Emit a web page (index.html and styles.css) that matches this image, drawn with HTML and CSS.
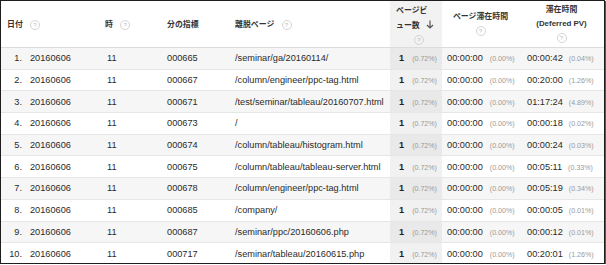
FILE: index.html
```html
<!DOCTYPE html>
<html lang="ja">
<head>
<meta charset="utf-8">
<link rel="stylesheet" href="styles.css">
</head>
<body>
<div class="frame">
<table class="report">
<colgroup>
<col class="c-idx"><col class="c-date"><col class="c-hour"><col class="c-metric"><col class="c-page"><col class="c-pv"><col class="c-time"><col class="c-def">
</colgroup>
<thead>
<tr>
<th colspan="2" class="h-left">日付 <span class="help">?</span></th>
<th class="h-left">時 <span class="help">?</span></th>
<th class="h-left">分の指標</th>
<th class="h-left">離脱ページ <span class="help">?</span></th>
<th class="h-pv sorted"><div class="pv-head"><span class="pv-text">ページビ<br>ュー数 <svg class="arrow" width="8" height="9" viewBox="0 0 8 9"><path d="M4 0.5V8M1 5l3 3 3-3" fill="none" stroke="#555" stroke-width="1.2"/></svg></span><span class="help">?</span></div></th>
<th class="h-center">ページ滞在時間<br><span class="help">?</span></th>
<th class="h-center">滞在時間<br>(Deferred PV)<br><span class="help">?</span></th>
</tr>
</thead>
<tbody>
<tr><td class="idx">1.</td><td>20160606</td><td class="num">11</td><td>000665</td><td>/seminar/ga/20160114/</td><td class="pv sorted"><b>1</b><span class="pct">(0.72%)</span></td><td class="tm"><span>00:00:00</span><span class="pct">(0.00%)</span></td><td class="tm td"><span>00:00:42</span><span class="pct">(0.04%)</span></td></tr>
<tr><td class="idx">2.</td><td>20160606</td><td class="num">11</td><td>000667</td><td>/column/engineer/ppc-tag.html</td><td class="pv sorted"><b>1</b><span class="pct">(0.72%)</span></td><td class="tm"><span>00:00:00</span><span class="pct">(0.00%)</span></td><td class="tm td"><span>00:20:00</span><span class="pct">(1.26%)</span></td></tr>
<tr><td class="idx">3.</td><td>20160606</td><td class="num">11</td><td>000671</td><td>/test/seminar/tableau/20160707.html</td><td class="pv sorted"><b>1</b><span class="pct">(0.72%)</span></td><td class="tm"><span>00:00:00</span><span class="pct">(0.00%)</span></td><td class="tm td"><span>01:17:24</span><span class="pct">(4.89%)</span></td></tr>
<tr><td class="idx">4.</td><td>20160606</td><td class="num">11</td><td>000673</td><td>/</td><td class="pv sorted"><b>1</b><span class="pct">(0.72%)</span></td><td class="tm"><span>00:00:00</span><span class="pct">(0.00%)</span></td><td class="tm td"><span>00:00:18</span><span class="pct">(0.02%)</span></td></tr>
<tr><td class="idx">5.</td><td>20160606</td><td class="num">11</td><td>000674</td><td>/column/tableau/histogram.html</td><td class="pv sorted"><b>1</b><span class="pct">(0.72%)</span></td><td class="tm"><span>00:00:00</span><span class="pct">(0.00%)</span></td><td class="tm td"><span>00:00:24</span><span class="pct">(0.03%)</span></td></tr>
<tr><td class="idx">6.</td><td>20160606</td><td class="num">11</td><td>000675</td><td>/column/tableau/tableau-server.html</td><td class="pv sorted"><b>1</b><span class="pct">(0.72%)</span></td><td class="tm"><span>00:00:00</span><span class="pct">(0.00%)</span></td><td class="tm td"><span>00:05:11</span><span class="pct">(0.33%)</span></td></tr>
<tr><td class="idx">7.</td><td>20160606</td><td class="num">11</td><td>000678</td><td>/column/engineer/ppc-tag.html</td><td class="pv sorted"><b>1</b><span class="pct">(0.72%)</span></td><td class="tm"><span>00:00:00</span><span class="pct">(0.00%)</span></td><td class="tm td"><span>00:05:19</span><span class="pct">(0.34%)</span></td></tr>
<tr><td class="idx">8.</td><td>20160606</td><td class="num">11</td><td>000685</td><td>/company/</td><td class="pv sorted"><b>1</b><span class="pct">(0.72%)</span></td><td class="tm"><span>00:00:00</span><span class="pct">(0.00%)</span></td><td class="tm td"><span>00:00:05</span><span class="pct">(0.01%)</span></td></tr>
<tr><td class="idx">9.</td><td>20160606</td><td class="num">11</td><td>000687</td><td>/seminar/ppc/20160606.php</td><td class="pv sorted"><b>1</b><span class="pct">(0.72%)</span></td><td class="tm"><span>00:00:00</span><span class="pct">(0.00%)</span></td><td class="tm td"><span>00:00:12</span><span class="pct">(0.01%)</span></td></tr>
<tr><td class="idx">10.</td><td>20160606</td><td class="num">11</td><td>000717</td><td>/seminar/tableau/20160615.php</td><td class="pv sorted"><b>1</b><span class="pct">(0.72%)</span></td><td class="tm"><span>00:00:00</span><span class="pct">(0.00%)</span></td><td class="tm td"><span>00:20:01</span><span class="pct">(1.26%)</span></td></tr>
</tbody>
</table>
</div>
</body>
</html>
```
FILE: styles.css
```css
html, body { margin: 0; padding: 0; background: #fff; }
.frame {
  width: 603px;
  height: 262px;
  border: 1px solid #1e1e1e;
  box-shadow: 1px 1px 0 #555;
  overflow: hidden;
  background: #fff;
}
.report {
  width: 603px;
  border-collapse: collapse;
  table-layout: fixed;
  font-family: "Liberation Sans", Arial, "Noto Sans CJK JP", sans-serif;
  font-size: 9.2px;
  color: #2a2a2a;
}
.c-idx { width: 24px; }
.c-date { width: 75px; }
.c-hour { width: 62px; }
.c-metric { width: 68px; }
.c-page { width: 160px; }
.c-pv { width: 52px; }
.c-time { width: 81px; }
.c-def { width: 81px; }

thead th {
  height: 44px;
  border-bottom: 1px solid #dcdcdc;
  font-family: "Liberation Sans", "Noto Sans CJK JP", sans-serif;
  font-size: 7.9px;
  font-weight: bold;
  color: #333;
  line-height: 14px;
  padding: 0;
  vertical-align: middle;
}
.h-left { text-align: left; padding-left: 5px; padding-top: 2px; }
th.h-left:first-child { padding-left: 6px; }
.h-center { text-align: center; padding-right: 4px; }
.h-pv { text-align: left; padding: 0; }
.pv-head { display: flex; flex-direction: column; align-items: flex-start; padding-left: 6px; }
.pv-head .help { margin-left: 18px; margin-top: 2px; }
.pv-text { line-height: 15px; }
.arrow { vertical-align: -1px; margin-left: 4px; }

.help {
  display: inline-flex;
  align-items: center;
  justify-content: center;
  width: 8px;
  height: 8px;
  border: 1px solid #d4d4d4;
  border-radius: 50%;
  font-family: "Liberation Sans", sans-serif;
  font-size: 6px;
  font-weight: normal;
  color: #bbb;
  line-height: 1;
  vertical-align: middle;
  margin-left: 3px;
}
.h-center .help { margin-left: 0; }
th.h-left .help { margin-left: 5px; }

tbody tr { height: 21.7px; }
tbody td {
  padding: 0 0 0 5px;
  border-bottom: 1px solid #e6e6e6;
  white-space: nowrap;
  vertical-align: middle;
}
tbody tr:nth-child(odd) { background: #f6f6f6; }
tbody tr:last-child td { border-bottom: none; }
td.idx { text-align: right; padding: 0 3px 0 0; }
td.num { padding-left: 7px; }
thead th.sorted { background: #f2f2f2; }
tbody tr:nth-child(odd) td.sorted { background: #e9e9e9; }
tbody tr:nth-child(even) td.sorted { background: #f1f1f1; }
td.pv { padding: 0 0 0 9px; }
td.pv b { font-weight: bold; color: #222; }
.pct {
  font-size: 7.1px;
  color: #9a9a9a;
  margin-left: 8px;
}
td.tm { padding-left: 5px; }
td.tm .pct { margin-left: 7px; }
td.td { padding-left: 4px; }
td.td .pct { margin-left: 6px; }
```
